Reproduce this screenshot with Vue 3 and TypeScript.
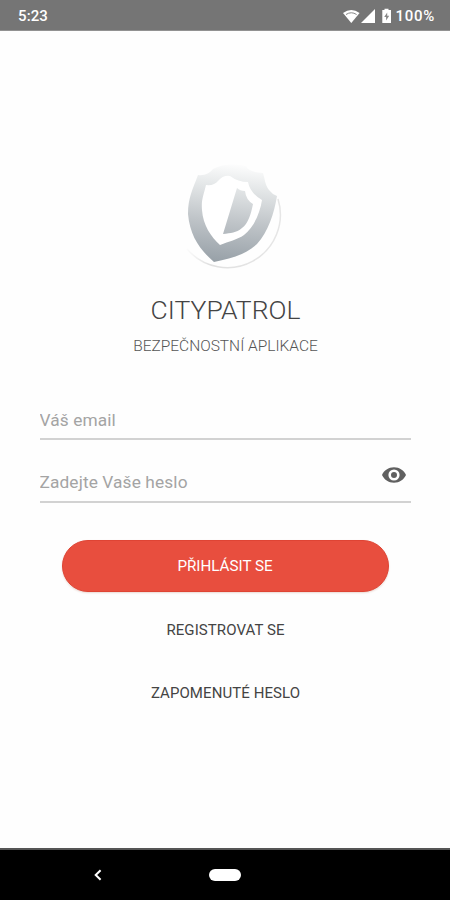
<script setup lang="ts">
import { ref } from 'vue'

const email = ref('')
const password = ref('')
const visible = ref(false)
</script>

<template>
  <div class="screen">
    <header class="status">
      <span class="time">5:23</span>
      <div class="indicators">
        <svg class="signals" viewBox="0 0 50 18" aria-hidden="true">
          <path d="M0 5Q8.300 -1 16.600 5L8.300 15Z" fill="#fff" />
          <path d="M3 6.500Q8.300 3 13.600 6.500" fill="none" stroke="#888" stroke-width="1" />
          <path d="M18 15L32 1V15Z" fill="#fff" />
          <path d="M41.500 2V.8H45.500V2H48V15H39.300V2Z" fill="#fff" />
          <path d="M44.200 4.500L41.200 9H43.100V12.500L46.200 7.800H44.200Z" fill="#888" />
        </svg>
        <span class="charge">100%</span>
      </div>
    </header>

    <main class="login">
      <svg class="logo" viewBox="0 0 120 130" aria-hidden="true">
        <defs>
          <linearGradient id="steel" gradientUnits="userSpaceOnUse" x1="64" y1="12" x2="54" y2="112">
            <stop offset="0" stop-color="#fff" />
            <stop offset=".25" stop-color="#e4e7e8" />
            <stop offset=".6" stop-color="#bfc4c8" />
            <stop offset="1" stop-color="#98a1a8" />
          </linearGradient>
          <linearGradient id="rim" gradientUnits="userSpaceOnUse" x1="15" y1="0" x2="109" y2="0">
            <stop offset="0" stop-color="#e2e2e2" stop-opacity="0" />
            <stop offset=".25" stop-color="#e0e0e0" />
            <stop offset="1" stop-color="#e6e6e6" />
          </linearGradient>
        </defs>
        <path d="M108 49A53 53 0 0 1 17 99" fill="none" stroke="url(#rim)" stroke-width="1.500" />
        <path
          d="M28 25C34 26 40 23 43 19Q57 12 76 16Q78 22 93 23C95 29 95 35 99 40Q102 44 107 46C104 64 98 82 87 94C75 105 62 108 44 112C30 100 20 86 18 64C18 47 23 39 28 25Z"
          fill="url(#steel)"
        />
        <path
          d="M36 35Q44 36 48 31Q53 25 60 26Q68 32 78 32Q80 43 92 50C90 63 84 77 74 85C67 90 59 91 50 95C41 87 33 75 32 60C31 50 34 44 36 35Z"
          fill="#fff"
        />
        <path d="M67 38Q70 41 75 41Q76 50 83 54C81 64 78 74 72 78C66 83 61 83 53 84Z" fill="url(#steel)" />
      </svg>

      <h1 class="title">CITYPATROL</h1>
      <p class="subtitle">BEZPEČNOSTNÍ APLIKACE</p>

      <form class="form" @submit.prevent>
        <label class="field">
          <input v-model="email" class="input email" type="text" placeholder="Váš email" />
        </label>
        <label class="field second">
          <input
            v-model="password"
            class="input secret"
            :type="visible ? 'text' : 'password'"
            placeholder="Zadejte Vaše heslo"
          />
          <svg class="eye" viewBox="0 0 24 16" @click="visible = !visible">
            <path
              d="M12 .3C6.500 .3 2 3.500 0 8C2 12.500 6.500 15.700 12 15.700S22 12.500 24 8C22 3.500 17.500 .3 12 .3ZM12 13.600A5.600 5.600 0 1 1 12 2.400A5.600 5.600 0 0 1 12 13.600ZM12 5A3 3 0 1 0 12 11A3 3 0 0 0 12 5Z"
              fill="#606060"
            />
          </svg>
        </label>
        <button class="submit" type="submit"><span class="submit-text">PŘIHLÁSIT SE</span></button>
      </form>
      <a class="link register">REGISTROVAT SE</a>
      <a class="link forgot">ZAPOMENUTÉ HESLO</a>
    </main>

    <nav class="navbar">
      <svg class="back" viewBox="0 0 8 12" aria-hidden="true">
        <path d="M6.600 1.200L1.700 6L6.600 10.800" fill="none" stroke="#fff" stroke-width="2" />
      </svg>
      <span class="home"></span>
    </nav>
  </div>
</template>

<style>
body {
  margin: 0;
  background: #fff;
}
</style>

<style scoped>
.screen {
  display: flex;
  flex-direction: column;
  width: 450px;
  height: 900px;
  overflow: hidden;
  background: #fefefe;
  font-family: Roboto, "Liberation Sans", sans-serif;
}
.status {
  display: flex;
  justify-content: space-between;
  box-sizing: border-box;
  height: 31px;
  padding: 0 16px 0 18px;
  background: #757575;
  border-bottom: 1px solid #929292;
  color: #fff;
  font-size: 15px;
  font-weight: 500;
  line-height: 33px;
}
.time {
  letter-spacing: 0.1px;
}
.charge {
  letter-spacing: 0.7px;
}
.indicators {
  display: flex;
}
.signals {
  width: 50px;
  height: 18px;
  margin: 8px 3px 0 0;
}
.charge {
  margin-right: -1px;
}
.login {
  display: flex;
  flex: 1;
  flex-direction: column;
  align-items: center;
}
.logo {
  width: 120px;
  height: 130px;
  margin: 119px 0 0 10px;
}
.title {
  margin: 12px 0 0;
  padding-left: 1px;
  color: #444;
  font-size: 26.5px;
  font-weight: 300;
  line-height: 36px;
}
.subtitle {
  margin: 8px 0 0;
  padding-left: 1px;
  color: #555;
  font-size: 15.5px;
  font-weight: 300;
  line-height: 20px;
}
.form {
  display: flex;
  flex-direction: column;
  width: 371px;
  margin-top: 49px;
}
.field {
  display: flex;
  box-sizing: border-box;
  height: 35px;
  border-bottom: 2px solid #d2d2d2;
}
.second {
  height: 45px;
  margin-top: 18px;
}
.input {
  flex: 1;
  min-width: 0;
  padding: 0;
  border: 0;
  outline: 0;
  background: transparent;
  color: #444;
  font: 400 17.3px/30px Roboto, "Liberation Sans", sans-serif;
  letter-spacing: 0.12px;
}
.input::placeholder {
  color: #a4a4a4;
  opacity: 1;
}
.email {
  height: 30px;
}
.secret {
  height: 30px;
  margin-top: 9px;
}
.eye {
  width: 24px;
  height: 16px;
  margin: 9px 5px 0 0;
}
.submit {
  align-self: center;
  width: 327px;
  height: 52px;
  margin-top: 37px;
  padding: 0;
  border: 1px solid #df4434;
  border-radius: 26px;
  background: #e84e3e;
  box-shadow: 0 1px 2px #ead8d2;
  color: #fff;
  font: 400 15.2px/20px Roboto, "Liberation Sans", sans-serif;
}
.link {
  padding-left: 1px;
  color: #444;
  font-size: 15px;
  font-weight: 400;
  line-height: 20px;
  letter-spacing: 0.08px;
}
.register {
  margin-top: 28px;
}
.forgot {
  margin-top: 43px;
}
.navbar {
  display: grid;
  grid-template-columns: 94px 1fr 94px;
  align-items: center;
  box-sizing: border-box;
  height: 52px;
  border-top: 2px solid #555;
  background: #000;
}
.back {
  width: 8px;
  height: 12px;
  justify-self: end;
  margin-right: -8px;
}
.home {
  justify-self: center;
  width: 32px;
  height: 12px;
  border-radius: 6px;
  background: #fff;
}
</style>
